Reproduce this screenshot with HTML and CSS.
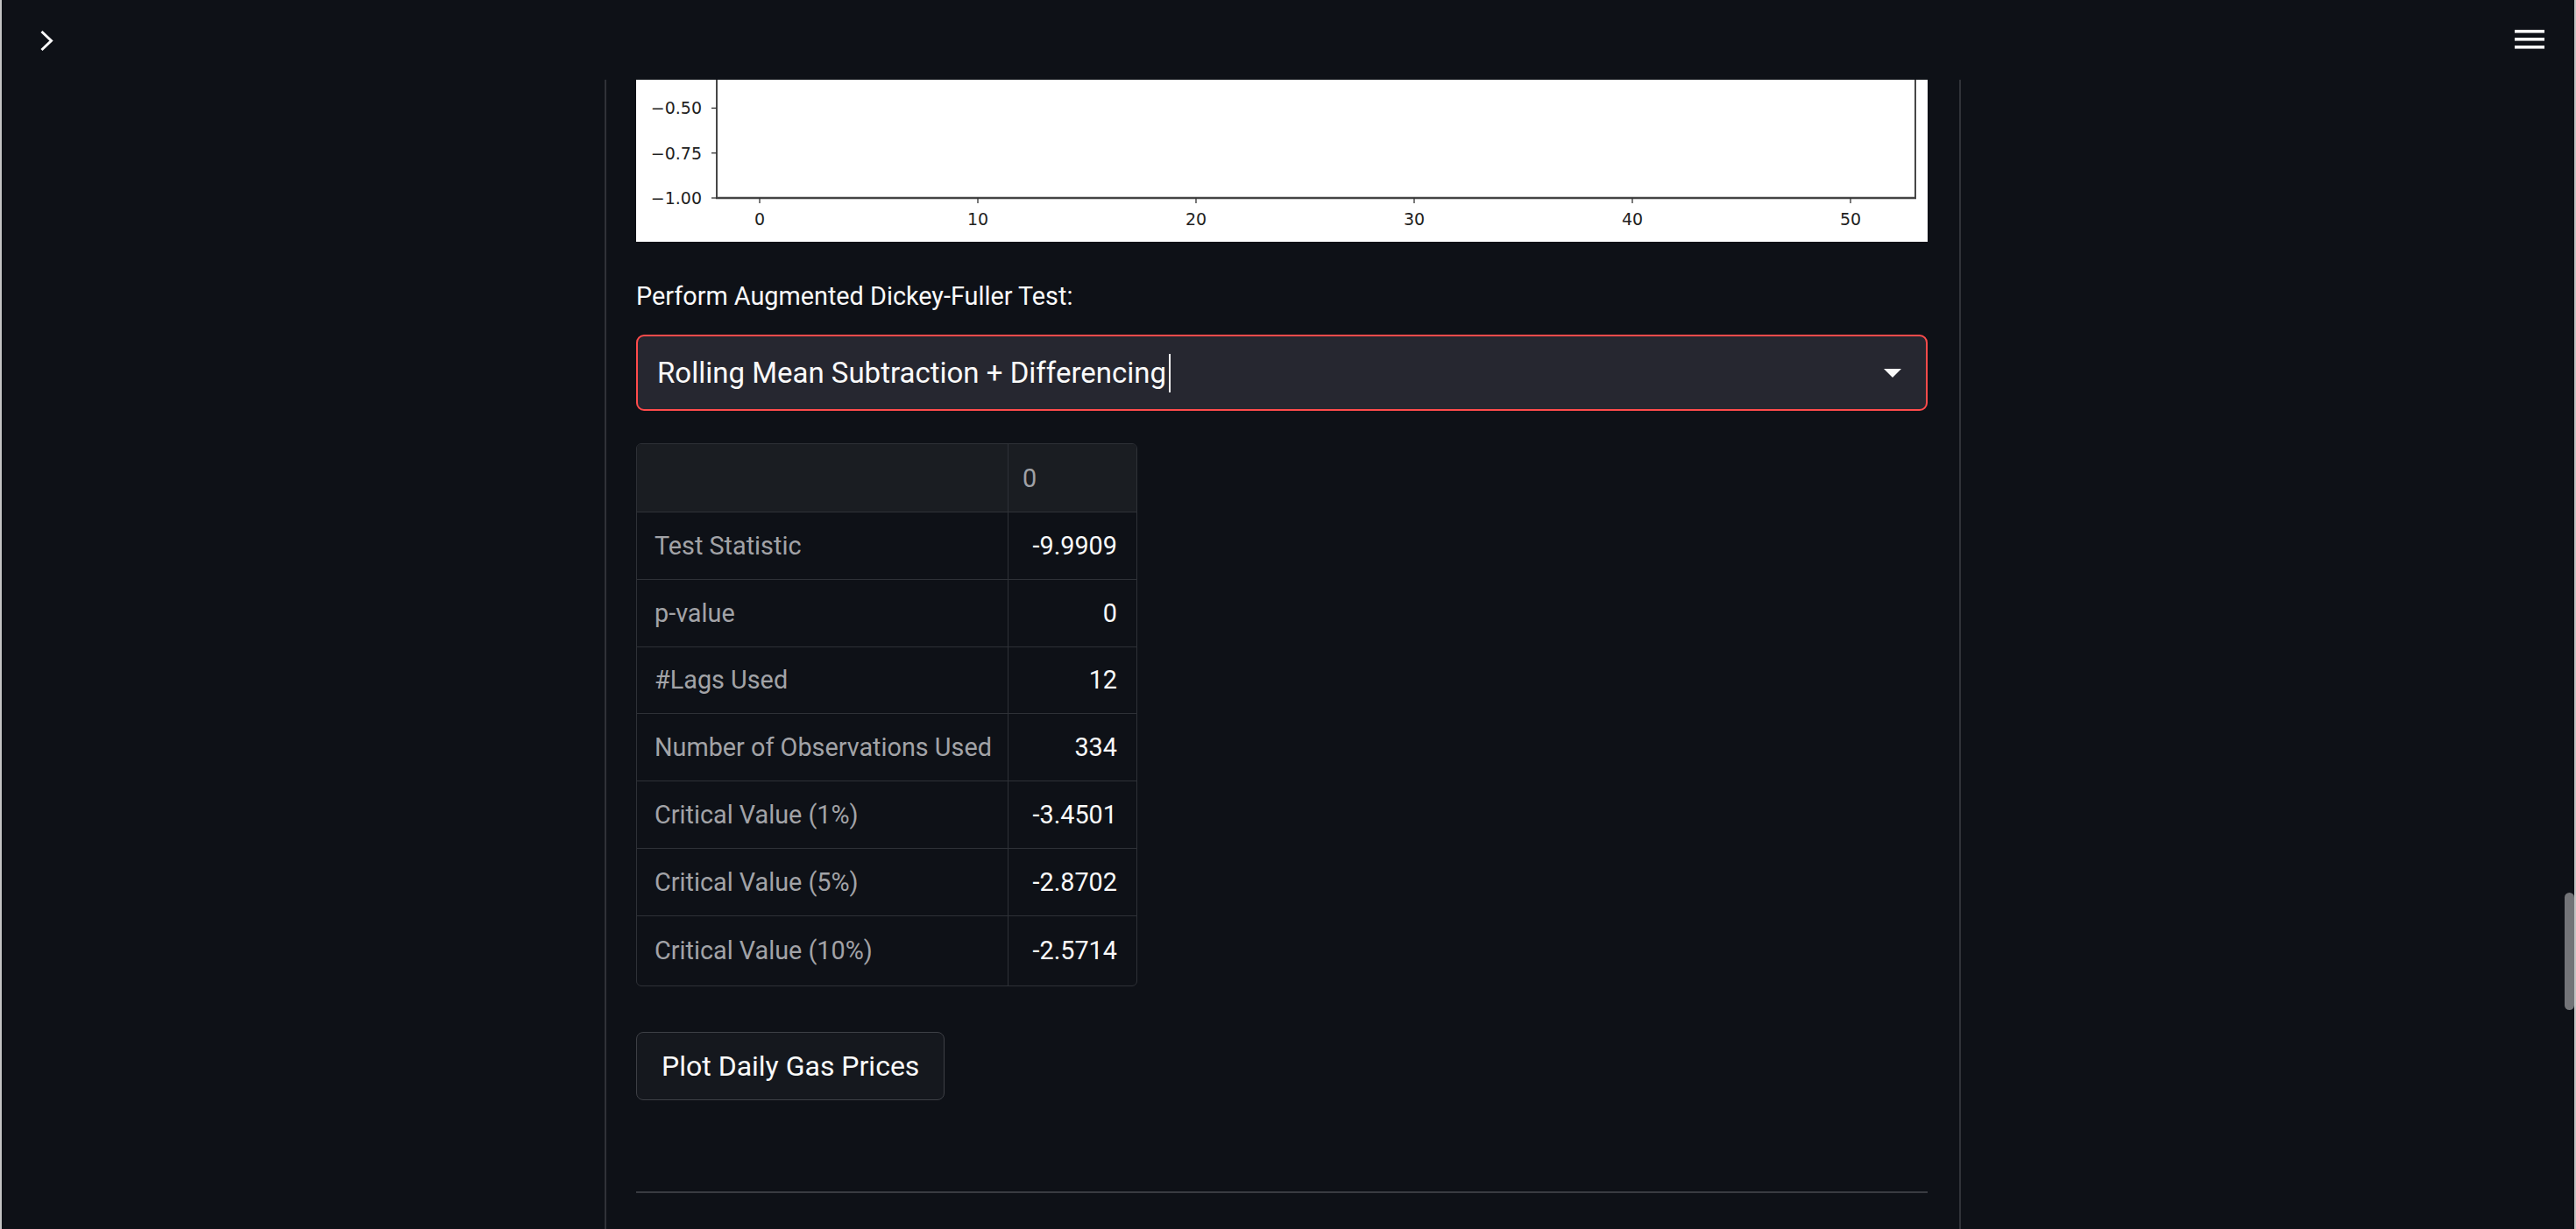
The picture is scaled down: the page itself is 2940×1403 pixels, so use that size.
FILE: index.html
```html
<!DOCTYPE html>
<html lang="en">
<head>
<meta charset="utf-8">
<title>Gas Prices – Stationarity</title>
<link rel="stylesheet" href="styles.css">
</head>
<body>
<div class="app">
  <header class="topbar">
    <button class="icon-btn" aria-label="Open sidebar">
      <svg class="chevron" width="15" height="25" viewBox="0 0 15 25"><path d="M1.5 2 L12.5 12.5 L1.5 23" fill="none" stroke="#fafafa" stroke-width="3"/></svg>
    </button>
    <button class="icon-btn" aria-label="Main menu">
      <svg class="burger" width="34" height="22" viewBox="0 0 34 22"><rect x="0" y="0" width="34" height="3.6" fill="#fafafa"/><rect x="0" y="9" width="34" height="3.6" fill="#fafafa"/><rect x="0" y="18" width="34" height="3.6" fill="#fafafa"/></svg>
    </button>
  </header>

  <div class="main-wrap">
    <main class="column">
      <figure class="plot">
        <svg width="1474" height="185" viewBox="0 0 1474 185">
          <rect x="0" y="0" width="1474" height="185" fill="#ffffff"/>
          <g stroke="#333333" stroke-width="1.8" fill="none">
            <line x1="92" y1="0" x2="92" y2="135.5"/>
            <line x1="1460" y1="0" x2="1460" y2="135.5"/>
          </g>
          <line x1="91" y1="135" x2="1461" y2="135" stroke="#444444" stroke-width="2.6"/>
          <g stroke="#333333" stroke-width="1.3">
            <line x1="86" y1="32.4" x2="92" y2="32.4"/>
            <line x1="86" y1="83.7" x2="92" y2="83.7"/>
            <line x1="86" y1="135" x2="92" y2="135"/>
            <line x1="141" y1="135" x2="141" y2="141"/>
            <line x1="390" y1="135" x2="390" y2="141"/>
            <line x1="639" y1="135" x2="639" y2="141"/>
            <line x1="888" y1="135" x2="888" y2="141"/>
            <line x1="1137" y1="135" x2="1137" y2="141"/>
            <line x1="1386" y1="135" x2="1386" y2="141"/>
          </g>
          <g class="tick-label" text-anchor="end">
            <text x="75" y="39.3">−0.50</text>
            <text x="75" y="90.6">−0.75</text>
            <text x="75" y="141.9">−1.00</text>
          </g>
          <g class="tick-label" text-anchor="middle">
            <text x="141" y="166">0</text>
            <text x="390" y="166">10</text>
            <text x="639" y="166">20</text>
            <text x="888" y="166">30</text>
            <text x="1137" y="166">40</text>
            <text x="1386" y="166">50</text>
          </g>
        </svg>
      </figure>

      <label class="widget-label">Perform Augmented Dickey-Fuller Test:</label>
      <div class="select">
        <div class="select-value"><span>Rolling Mean Subtraction + Differencing</span><span class="caret"></span></div>
        <svg class="select-arrow" width="20" height="10" viewBox="0 0 20 10"><polygon points="0,0 20,0 10,10" fill="#fafafa"/></svg>
      </div>

      <table class="adf">
        <colgroup><col class="c1"><col class="c2"></colgroup>
        <thead>
          <tr><th class="corner"></th><th class="colhead">0</th></tr>
        </thead>
        <tbody>
          <tr><th class="rowhead">Test Statistic</th><td>-9.9909</td></tr>
          <tr><th class="rowhead">p-value</th><td>0</td></tr>
          <tr><th class="rowhead">#Lags Used</th><td>12</td></tr>
          <tr><th class="rowhead">Number of Observations Used</th><td>334</td></tr>
          <tr><th class="rowhead">Critical Value (1%)</th><td>-3.4501</td></tr>
          <tr><th class="rowhead">Critical Value (5%)</th><td>-2.8702</td></tr>
          <tr class="last"><th class="rowhead">Critical Value (10%)</th><td>-2.5714</td></tr>
        </tbody>
      </table>

      <button class="btn">Plot Daily Gas Prices</button>

      <hr class="divider">
    </main>
  </div>

  <div class="scroll-thumb"></div>
</div>
</body>
</html>
```

FILE: styles.css
```css
html, body {
  margin: 0;
  padding: 0;
  height: 100%;
  overflow: hidden;
  background: #0e1117;
}

body {
  font-family: Roboto, "Liberation Sans", sans-serif;
  color: #fafafa;
}

.app {
  position: relative;
  height: 100vh;
  box-sizing: border-box;
  border-left: 2px solid #c4c4c4;
  border-right: 2px solid #c4c4c4;
  display: flex;
  flex-direction: column;
  overflow: hidden;
}

.topbar {
  height: 91px;
  flex: 0 0 91px;
  box-sizing: border-box;
  display: flex;
  justify-content: space-between;
  align-items: flex-start;
  padding: 34px 34px 0 44px;
}

.icon-btn {
  background: none;
  border: none;
  padding: 0;
  margin: 0;
  display: block;
  line-height: 0;
}

.chevron, .burger {
  display: block;
}

.main-wrap {
  flex: 1 1 auto;
  min-height: 0;
  padding-right: 12px;
  display: flex;
  justify-content: center;
}

.column {
  width: 1548px;
  box-sizing: border-box;
  border-left: 2px solid #303238;
  border-right: 2px solid #303238;
  padding: 0 36px 0 34px;
  display: flex;
  flex-direction: column;
  align-items: flex-start;
}

.plot {
  margin: 0;
  width: 1474px;
  height: 185px;
  flex: 0 0 auto;
}

.plot svg {
  display: block;
}

.tick-label {
  font-family: "DejaVu Sans", sans-serif;
  font-size: 19px;
  fill: #222222;
}

.widget-label {
  display: block;
  margin-top: 39px;
  font-size: 28.8px;
  line-height: 46px;
  color: #fafafa;
}

.select {
  margin-top: 21px;
  width: 1474px;
  height: 87px;
  box-sizing: border-box;
  border: 2px solid #ff4b4b;
  border-radius: 9px;
  background: #262730;
  display: flex;
  align-items: center;
  justify-content: space-between;
  padding: 0 28px 0 22px;
  flex: 0 0 auto;
}

.select-value {
  display: flex;
  align-items: center;
  font-size: 33px;
  line-height: 46px;
  color: #fafafa;
}

.caret {
  display: block;
  width: 2px;
  height: 44px;
  margin-left: 3px;
  background: #fafafa;
}

.select-arrow {
  display: block;
}

.adf {
  margin-top: 37px;
  table-layout: fixed;
  width: 572px;
  border-collapse: separate;
  border-spacing: 0;
  border: 1px solid #2e3137;
  border-radius: 6px;
  overflow: hidden;
  font-size: 28.8px;
  flex: 0 0 auto;
}

.adf col.c1 { width: 424px; }
.adf col.c2 { width: 146px; }

.adf th, .adf td {
  padding: 0;
  font-weight: 400;
  vertical-align: middle;
  border-bottom: 1px solid #2e3137;
}

.adf thead th {
  height: 77px;
  background: #1a1d22;
}

.adf .corner {
  border-right: 1px solid #2e3137;
}

.adf .colhead {
  text-align: left;
  padding-left: 16px;
  color: #a0a1a6;
}

.adf .rowhead {
  text-align: left;
  padding-left: 20px;
  color: #a2a3a7;
  border-right: 1px solid #2e3137;
  white-space: nowrap;
  height: 75.8px;
}

.adf td {
  text-align: right;
  padding-right: 22px;
  color: #fafafa;
}

.adf tr.last th, .adf tr.last td {
  border-bottom: none;
  height: 79px;
}

.btn {
  margin-top: 52px;
  height: 78px;
  box-sizing: border-box;
  display: flex;
  align-items: center;
  padding: 0 28px;
  background: #15181e;
  border: 1px solid #3e4046;
  border-radius: 8px;
  color: #fafafa;
  font-family: Roboto, "Liberation Sans", sans-serif;
  font-size: 32px;
  flex: 0 0 auto;
}

.divider {
  margin: 104px 0 0 0;
  width: 1474px;
  height: 2px;
  border: none;
  background: #393b41;
  flex: 0 0 auto;
}

.scroll-thumb {
  position: absolute;
  top: 1019px;
  right: 0;
  width: 11px;
  height: 134px;
  border-radius: 6px;
  background: #737478;
}
```
